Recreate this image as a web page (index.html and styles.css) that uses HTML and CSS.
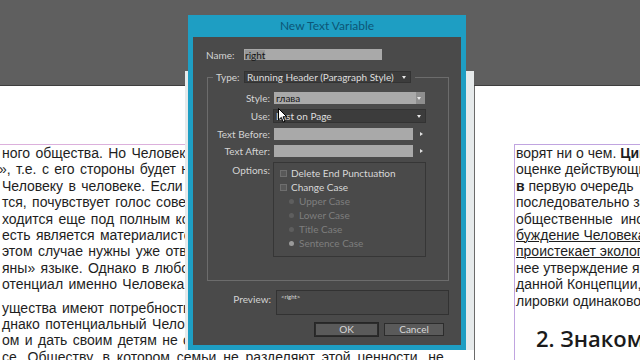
FILE: index.html
```html
<!doctype html>
<html lang="ru">
<head>
  <meta charset="UTF-8">
  <meta name="viewport" content="width=device-width, initial-scale=1.0">
  <title>New Text Variable</title>
  <link rel="stylesheet" href="styles.css">
</head>
<body>
  <div class="pasteboard"></div>

  <div class="spread">
    <div class="page page-left">
      <div class="frame frame-left">
        <p class="para">
          <span class="ln">ного общества. Но Человек с</span>
          <span class="ln shift">», т.е. с его стороны будет не</span>
          <span class="ln">Человеку в человеке. Если ч</span>
          <span class="ln">тся, почувствует голос совест</span>
          <span class="ln">ходится еще под полным ко</span>
          <span class="ln">есть является материалисто</span>
          <span class="ln">этом случае нужны уже отве</span>
          <span class="ln">яны» языке. Однако в любо</span>
          <span class="ln">отенциал именно Человека в</span>
        </p>
        <p class="para">
          <span class="ln">ущества имеют потребность</span>
          <span class="ln">днако потенциальный Челове</span>
          <span class="ln">ом и дать своим детям не од</span>
          <span class="ln last">се. Обществу, в котором семьи не разделяют этой ценности, не</span>
        </p>
      </div>
    </div>

    <div class="page page-right">
      <div class="frame frame-right">
        <p class="para">
          <span class="ln">ворят ни о чем. <b>Цивилизация</b></span>
          <span class="ln">оценке действующих</span>
          <span class="ln"><b>в</b> первую очередь</span>
          <span class="ln">последовательно за</span>
          <span class="ln wide">общественные  инод</span>
          <span class="ln"><u>буждение Человека</u></span>
          <span class="ln"><u>проистекает экологи</u></span>
          <span class="ln">нее утверждение яв</span>
          <span class="ln">данной Концепции,</span>
          <span class="ln">лировки одинаково</span>
        </p>
        <h2 class="heading">2. Знакомьтесь</h2>
      </div>
    </div>
  </div>

  <div class="backwin"></div>

  <div class="dialog">
    <div class="dialog-title">New Text Variable</div>
    <div class="dialog-body">

      <div class="name-row">
        <span class="name-label">Name:</span>
        <span class="field light name-field"><span class="sel">right</span></span>
      </div>

      <div class="type-group">
        <div class="legend">
          <span class="type-label">Type:</span>
          <span class="field dark type-select">Running Header (Paragraph Style)<i class="tri"></i></span>
        </div>

        <div class="rows">
          <span class="lbl">Style:</span>
          <span class="combo">
            <span class="field light combo-text">глава</span>
            <span class="combo-btn"><i class="tri"></i></span>
          </span>

          <span class="lbl lbl-use">Use:</span>
          <span class="field dark use-select">Last on Page<i class="tri"></i></span>

          <span class="lbl">Text Before:</span>
          <span class="text-row">
            <span class="field light text-field"></span>
            <i class="tri-right"></i>
          </span>

          <span class="lbl">Text After:</span>
          <span class="text-row">
            <span class="field light text-field"></span>
            <i class="tri-right"></i>
          </span>

          <span class="lbl lbl-top">Options:</span>
          <div class="options">
            <div class="opt"><span class="check"></span>Delete End Punctuation</div>
            <div class="opt"><span class="check"></span>Change Case</div>
            <div class="opt radio-opt"><span class="radio"></span>Upper Case</div>
            <div class="opt radio-opt"><span class="radio"></span>Lower Case</div>
            <div class="opt radio-opt"><span class="radio"></span>Title Case</div>
            <div class="opt radio-opt"><span class="radio on"></span>Sentence Case</div>
          </div>
        </div>
      </div>

      <div class="preview-row">
        <span class="preview-label">Preview:</span>
        <div class="preview-box">&lt;right&gt;</div>
      </div>

      <div class="buttons">
        <span class="btn btn-ok">OK</span>
        <span class="btn btn-cancel">Cancel</span>
      </div>
    </div>
  </div>

  <svg class="cursor" width="10" height="15" viewBox="0 0 10 15">
    <path d="M0.5 0.5 L0.5 12 L3.3 9.4 L5.3 14 L7 13.2 L5 8.8 L8.8 8.8 Z" fill="#fff" stroke="#000" stroke-width="1"/>
  </svg>
</body>
</html>
```

FILE: styles.css
```css
* {
  box-sizing: border-box;
}

body {
  margin: 0;
  width: 640px;
  height: 360px;
  overflow: hidden;
  background-color: #5f5f5f;
  font-family: 'Liberation Sans', Arial, sans-serif;
}

.pasteboard {
  height: 85px;
}

.spread {
  display: flex;
  height: 275px;
  border-top: 1px solid #3e3e3e;
  background-color: #fff;
}

.page {
  overflow: hidden;
  background-color: #fff;
}

.page-left {
  width: 474px;
}

.page-right {
  flex: 1;
  border-left: 1px solid #6a6a6a;
  padding-left: 39px;
}

.frame {
  margin-top: 58px;
  color: #1e1e1e;
  font-size: 14px;
  line-height: 16.4px;
}

.frame-left {
  border-top: 1px solid #dcb0dc;
  padding-left: 2px;
  word-spacing: 1.5px;
}

.frame-right {
  border-top: 1px solid #c0a4e0;
  border-left: 1px solid #c0a4e0;
  padding-left: 1px;
  height: 300px;
}

.para {
  margin: 0 0 7px;
}

.ln {
  display: block;
  white-space: nowrap;
}

.ln.shift {
  margin-left: -3px;
}

.ln.last {
  word-spacing: 3px;
}

.ln.wide {
  word-spacing: 4px;
}

.ln u {
  text-decoration-thickness: 1px;
  text-underline-offset: 1px;
}

.heading {
  margin: 16px 0 0 20px;
  font-family: 'Open Sans', 'DejaVu Sans', sans-serif;
  font-size: 22px;
  font-weight: 600;
  line-height: 26px;
  white-space: nowrap;
  color: #1a1a1a;
}

/* window behind the dialog */
.backwin {
  position: absolute;
  left: 185px;
  top: 71px;
  width: 289px;
  height: 279px;
  background-color: #e6eaeb;
}

.dialog {
  position: absolute;
  left: 188px;
  top: 15px;
  width: 278px;
  height: 335px;
  padding: 0 5px 5px;
  display: flex;
  flex-direction: column;
  background-color: #1e9ec3;
  font-family: Lato, 'Liberation Sans', sans-serif;
  font-size: 10px;
  color: #d4d4d4;
}

.dialog-title {
  height: 22px;
  line-height: 22px;
  text-align: center;
  font-size: 12px;
  color: #0c5676;
}

.dialog-body {
  flex: 1;
  display: flex;
  flex-direction: column;
  padding: 12px 12px 9px 13px;
  background-color: #4a4a4a;
}

.field {
  display: flex;
  align-items: center;
  position: relative;
  white-space: nowrap;
}

.field.light {
  background-color: #a9a9a9;
  color: #151515;
}

.field.dark {
  background-color: #3c3c3c;
  border: 1px solid #333;
  color: #dedede;
  padding-left: 2px;
}

.tri {
  position: absolute;
  right: 4px;
  top: 50%;
  margin-top: -1px;
  border-left: 2.5px solid transparent;
  border-right: 2.5px solid transparent;
  border-top: 3px solid #e8e8e8;
}

.tri-right {
  display: inline-block;
  margin-left: 7px;
  border-top: 2.5px solid transparent;
  border-bottom: 2.5px solid transparent;
  border-left: 3px solid #e0e0e0;
}

.name-row {
  display: flex;
  align-items: center;
  height: 11px;
}

.name-label {
  width: 38px;
}

.name-field {
  width: 138px;
  height: 11px;
  padding-left: 1px;
}

.sel {
  background-color: #979797;
  line-height: 10px;
}

.type-group {
  margin: 17px 0 0 1px;
  height: 204px;
  border: 1px solid #6c6c6c;
}

.legend {
  display: flex;
  align-items: center;
  width: fit-content;
  height: 12px;
  margin: -7px 0 0 5px;
  padding: 0 4px 0 3px;
  background-color: #4a4a4a;
}

.type-label {
  width: 28px;
}

.type-select {
  width: 167px;
  height: 12px;
  padding-left: 3px;
}

.rows {
  display: grid;
  grid-template-columns: 62px 1fr;
  column-gap: 4px;
  row-gap: 5px;
  margin-top: 9px;
}

.lbl {
  text-align: right;
  align-self: center;
  line-height: 12px;
}

.lbl-top {
  align-self: start;
  padding-top: 2px;
}

.combo {
  display: flex;
  width: 151px;
  height: 12px;
}

.combo-text {
  flex: 1;
  padding-left: 2px;
}

.combo-btn {
  position: relative;
  width: 9px;
  background-color: #8e8e8e;
}

.use-select {
  width: 153px;
  height: 14px;
  margin-left: -1px;
  border: 1px solid #9c6c38;
  padding-left: 3px;
}

.text-row {
  display: flex;
  align-items: center;
  height: 12px;
}

.text-field {
  width: 139px;
  height: 12px;
}

.options {
  width: 153px;
  height: 95px;
  margin-left: -1px;
  padding: 3px 0 0 6px;
  border: 1px solid #363636;
}

.opt {
  display: flex;
  align-items: center;
  height: 14px;
  color: #d8d8d8;
}

.check {
  width: 7px;
  height: 7px;
  margin-right: 4px;
  background-color: #585858;
  border: 1px solid #6e6e6e;
}

.radio-opt {
  padding-left: 9px;
  color: #7e7e7e;
}

.radio {
  width: 5px;
  height: 5px;
  margin-right: 5px;
  border-radius: 50%;
  background-color: #5e5e5e;
}

.radio.on {
  background-color: #9a9a9a;
}

.preview-row {
  display: flex;
  margin-top: 9px;
}

.preview-label {
  width: 65px;
  margin-right: 5px;
  padding-top: 3px;
  text-align: right;
}

.preview-box {
  width: 173px;
  height: 25px;
  padding: 2px 0 0 4px;
  border: 1px solid #323232;
  background-color: #474747;
  font-size: 6px;
  color: #dcdcdc;
}

.buttons {
  display: flex;
  justify-content: flex-end;
  gap: 6px;
  margin-top: 8px;
  padding-right: 5px;
}

.btn {
  height: 13px;
  line-height: 11px;
  text-align: center;
  border: 1px solid #2c2c2c;
  background-color: #5a5a5a;
  color: #d8d8d8;
}

.btn-ok {
  width: 63px;
  box-shadow: 0 0 0 1px #262626;
}

.btn-cancel {
  width: 60px;
}

.cursor {
  position: absolute;
  left: 278px;
  top: 108px;
}
```
